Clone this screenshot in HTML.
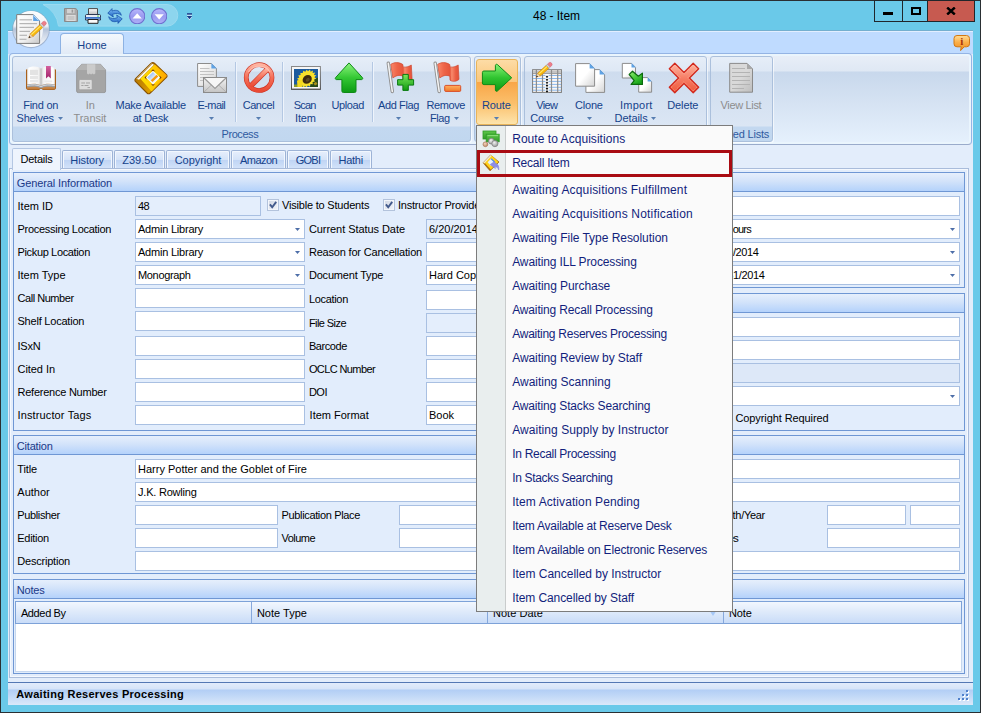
<!DOCTYPE html>
<html><head><meta charset="utf-8"><title>48 - Item</title>
<style>

html,body{margin:0;padding:0}
body{width:981px;height:713px;position:relative;overflow:hidden;background:#6ac9e9;font:11px "Liberation Sans",sans-serif;color:#000}
div,span,svg{position:absolute;box-sizing:border-box}
.x{white-space:pre;line-height:16px;height:16px}
.t{font:11px "Liberation Sans",sans-serif}
.tb{font:bold 11px "Liberation Sans",sans-serif}
.s{font:12px "Liberation Sans",sans-serif}
.rb{color:#15428b}
.in{background:#fff;border:1px solid #a9c0e2}
.ind{background:#e4eefc;border:1px solid #a9c0e2}
.gb{border:1px solid #6f97d4;background:#e2edfc}
.gh{background:linear-gradient(#e6effc 0%,#d3e3fa 45%,#b4d2fb 100%);border-bottom:1px solid #6f97d4}
.tab{border:1px solid #9db3d6;border-bottom:none;border-radius:2px 2px 0 0;background:linear-gradient(#e7effc 0%,#d5e3f8 50%,#bfd4f4 53%,#d2e2f9 100%);box-shadow:inset 1px 1px 0 #f2f7fe,inset -1px 0 0 #f2f7fe}
.grp{border:1px solid #abc0dc;border-radius:3px;background:linear-gradient(#e6eef8 0px,#dee8f5 14px,#cedcee 15px,#dbe6f4 69px,#c3d8f0 70px,#c1d7ef 100%);box-shadow:1px 1px 0 rgba(255,255,255,.6)}
.sep{width:1px;background:#b4c8e3;border-right:1px solid #eef4fc;box-sizing:content-box}

</style></head>
<body>
<div class="" style="left:0px;top:0px;width:981px;height:713px;border:1px solid #2a2f33;border-right-color:#2a2f33;"></div>
<span class="x s" style="left:533.00px;top:9px;letter-spacing:-0.040px;">48 - Item</span>
<div class="" style="left:874px;top:0px;width:101px;height:22px;border:1px solid #20262b;background:#6ac9e9"></div>
<div class="" style="left:902px;top:1px;width:1px;height:20px;background:#20262b"></div>
<div class="" style="left:927px;top:1px;width:1px;height:20px;background:#20262b"></div>
<div class="" style="left:928px;top:1px;width:46px;height:20px;background:#c75a50"></div>
<div class="" style="left:883px;top:12px;width:10px;height:3px;background:#000"></div>
<div class="" style="left:911px;top:7px;width:10px;height:8px;border:2px solid #000"></div>
<svg style="left:946px;top:7px" width="10" height="8" viewBox="0 0 10 8"><path d="M1.2 0.5L8.8 7.5M8.8 0.5L1.2 7.5" stroke="#000" stroke-width="2.4" fill="none"/></svg>
<svg style="left:0;top:0" width="200" height="31" viewBox="0 0 200 31"><path d="M43 4.5H167A10.8 10.8 0 0 1 167 26.1H58.5A27 27 0 0 0 43 4.5z" fill="#8dd5ee" stroke="#9adaf0" stroke-width="1"/></svg>
<svg style="left:64px;top:8px" width="14" height="14" viewBox="0 0 14 14">
<path d="M0.5 0.5H11.8L13.5 2.2V13.5H0.5z" fill="#a9a9a9" stroke="#8a8a8a"/>
<rect x="3" y="1" width="7.5" height="4.2" fill="#d2d2d2"/><rect x="7.6" y="1.6" width="1.6" height="3" fill="#9a9a9a"/>
<rect x="2.3" y="7" width="9.4" height="6" fill="#dcdcdc"/><path d="M3.5 9H10.5M3.5 11H10.5" stroke="#b0b0b0" stroke-width="1"/>
</svg>
<svg style="left:85px;top:8px" width="16" height="16" viewBox="0 0 16 16">
<defs><linearGradient id="pr1" x1="0" y1="0" x2="0" y2="1"><stop offset="0" stop-color="#ffffff"/><stop offset="1" stop-color="#b9b9b9"/></linearGradient></defs>
<path d="M3.5 0.6H12.5V7H3.5z" fill="url(#pr1)" stroke="#4a4a4a" stroke-width="1"/>
<path d="M1.5 6.5h13a1.2 1.2 0 0 1 1 1.2V12H0.5V7.7a1.2 1.2 0 0 1 1-1.2z" fill="#e9edf4" stroke="#2c3a55" stroke-width="1"/>
<rect x="0.6" y="9" width="14.8" height="1.8" fill="#3f74c8"/>
<rect x="12" y="7.6" width="2" height="1" fill="#5fd05f"/>
<path d="M3 11.5H13V15.3H3z" fill="#fafafa" stroke="#222" stroke-width="1"/>
</svg>
<svg style="left:107px;top:8px" width="16" height="16" viewBox="0 0 16 16">
<defs><linearGradient id="rf1" x1="0" y1="0" x2="0" y2="1"><stop offset="0" stop-color="#7fc0f5"/><stop offset="1" stop-color="#1d62c4"/></linearGradient></defs>
<path d="M0.8 5.2L5 0.6V3C9.5 1.2 13.3 3 14.3 7.3C12.3 5.2 9 5 5.6 6.3L6.3 9z" fill="url(#rf1)" stroke="#1c57ad" stroke-width="0.8"/>
<path d="M15.2 10.8L11 15.4V13C6.5 14.8 2.7 13 1.7 8.7C3.7 10.8 7 11 10.4 9.7L9.7 7z" fill="url(#rf1)" stroke="#1c57ad" stroke-width="0.8"/>
</svg>
<svg style="left:128.8px;top:7.5px" width="16.4" height="16.4" viewBox="0 0 16.4 16.4">
<defs><linearGradient id="cu" x1="0" y1="0" x2="0" y2="1"><stop offset="0" stop-color="#b9b9fb"/><stop offset="0.5" stop-color="#9a9af0"/><stop offset="1" stop-color="#aeb0f6"/></linearGradient></defs>
<circle cx="8.2" cy="8.2" r="7.6" fill="url(#cu)" stroke="#6f6fd0" stroke-width="1.1"/>
<path d="M3.6 10.6L8.2 5.3L12.8 10.6z" fill="#fff"/></svg>
<svg style="left:150.8px;top:7.5px" width="16.4" height="16.4" viewBox="0 0 16.4 16.4">
<defs><linearGradient id="cd" x1="0" y1="0" x2="0" y2="1"><stop offset="0" stop-color="#b9b9fb"/><stop offset="0.5" stop-color="#9a9af0"/><stop offset="1" stop-color="#aeb0f6"/></linearGradient></defs>
<circle cx="8.2" cy="8.2" r="7.6" fill="url(#cd)" stroke="#6f6fd0" stroke-width="1.1"/>
<path d="M3.6 6.2L8.2 11.5L12.8 6.2z" fill="#fff"/></svg>
<svg style="left:186px;top:12px" width="7" height="9" viewBox="0 0 7 9">
<rect x="1" y="2" width="5" height="1.6" fill="#e8f6fc"/><path d="M1 5H6L3.5 8.3z" fill="#e8f6fc"/>
<rect x="1" y="1.2" width="5" height="1.5" fill="#1a3c8c"/><path d="M0.8 4H6.2L3.5 7.3z" fill="#1a3c8c"/>
</svg>
<div class="" style="left:8px;top:31px;width:965px;height:674px;background:#e3edfb"></div>
<div class="" style="left:8px;top:30px;width:965px;height:24px;background:#bfdbff;border-top:1px solid #74afcf;box-shadow:inset 0 1px 0 #e2eeff"></div>
<div class="" style="left:60px;top:33px;width:64px;height:21px;border:1px solid #8db2e3;border-bottom:none;border-radius:4px 4px 0 0;background:linear-gradient(#f4f8fd,#e1eaf6)"></div>
<span class="x t" style="left:77.33px;top:39px;color:#15428b;">Home</span>
<svg style="left:953.3px;top:34px" width="18" height="18" viewBox="0 0 18 18">
<defs><linearGradient id="if1" x1="0" y1="0" x2="0" y2="1"><stop offset="0" stop-color="#ffdc96"/><stop offset="0.45" stop-color="#fbb04a"/><stop offset="1" stop-color="#f08a1c"/></linearGradient></defs>
<path d="M4 1.5H13.5A3 3 0 0 1 16.5 4.5V9.8A3 3 0 0 1 13.5 12.8H11.2L7.6 16.6L8.2 12.8H4A3 3 0 0 1 1 9.8V4.5A3 3 0 0 1 4 1.5z" fill="url(#if1)" stroke="#d27812" stroke-width="1"/>
<text x="8.8" y="11.4" font-family="Liberation Serif,serif" font-weight="bold" font-size="11" text-anchor="middle" fill="#a8300c">i</text>
</svg>
<div class="" style="left:9px;top:53px;width:963px;height:92px;border:1px solid #94b4e4;border-bottom-color:#9aabcb;border-radius:4px;box-shadow:inset 0 0 0 2px #eaf5fd;background:linear-gradient(#e9eff8 0px,#dfe8f4 17px,#c8d8ec 18px,#d6e3f3 50px,#e6f1fd 100%)"></div>
<div class="" style="left:61px;top:53px;width:62px;height:1px;background:#e1eaf6"></div>
<div class="grp" style="left:12px;top:56px;width:459px;height:86px;"></div>
<div class="grp" style="left:474px;top:56px;width:47px;height:86px;"></div>
<div class="grp" style="left:524px;top:56px;width:183px;height:86px;"></div>
<div class="grp" style="left:710px;top:56px;width:63px;height:86px;"></div>
<span class="x t" style="left:221.60px;top:128px;letter-spacing:-0.450px;color:#2f5aa0;">Process</span>
<span class="x t" style="left:708.10px;top:128px;letter-spacing:-0.200px;color:#2f5aa0;">Related Lists</span>
<div class="sep" style="left:235px;top:62px;width:1px;height:60px;"></div>
<div class="sep" style="left:282px;top:62px;width:1px;height:60px;"></div>
<div class="sep" style="left:372px;top:62px;width:1px;height:60px;"></div>
<div class="" style="left:476px;top:59px;width:42px;height:66px;border:1px solid #e8b45a;border-radius:3px;background:linear-gradient(#fddca6 0%,#fbc77c 34%,#f9a648 35%,#fbc06c 68%,#fde4ac 100%)"></div>
<svg style="left:24px;top:62px" width="36" height="32" viewBox="24 62 36 32">
<defs>
<linearGradient id="bk1" x1="0" y1="0" x2="1" y2="0"><stop offset="0" stop-color="#e4e4e4"/><stop offset="0.12" stop-color="#ffffff"/><stop offset="0.8" stop-color="#f4f4f4"/><stop offset="1" stop-color="#cfcfcf"/></linearGradient>
<linearGradient id="bk2" x1="0" y1="0" x2="1" y2="0"><stop offset="0" stop-color="#cfcfcf"/><stop offset="0.2" stop-color="#f4f4f4"/><stop offset="0.88" stop-color="#ffffff"/><stop offset="1" stop-color="#e4e4e4"/></linearGradient>
<linearGradient id="bk3" x1="0" y1="0" x2="0" y2="1"><stop offset="0" stop-color="#d4609e"/><stop offset="1" stop-color="#a2246a"/></linearGradient>
</defs>
<path d="M26.5 69.8V88.3C26.5 89 27 89.4 27.6 89.4H39.4L40.2 88.4H41.8L42.6 89.4H54.4C55 89.4 55.5 89 55.5 88.3V69.8z" fill="#c98544" stroke="#a9611c" stroke-width="1"/>
<path d="M27.2 84.5C31.5 83.2 38 83.4 41 85.6C44 83.4 50.5 83.2 54.8 84.5V87.4C50.5 86.4 44.5 86.6 41.6 88.2H40.4C37.5 86.6 31.5 86.4 27.2 87.4z" fill="#9a9ea4"/>
<path d="M27.2 85.6C31.5 84.4 38 84.6 41 86.6C44 84.6 50.5 84.4 54.8 85.6" stroke="#e2e4e6" stroke-width="0.9" fill="none"/>
<path d="M27.2 68.2C31.5 65.8 38 65.8 41 68.6V85.6C38 83.4 31.5 83.2 27.2 84.5z" fill="url(#bk1)"/>
<path d="M54.8 68.2C50.5 65.8 44 65.8 41 68.6V85.6C44 83.4 50.5 83.2 54.8 84.5z" fill="url(#bk2)"/>
<path d="M41 68.6V85.8" stroke="#bdbdbd" stroke-width="0.8"/>
<rect x="30" y="69.8" width="8" height="5.2" fill="#e3e3e3"/><rect x="30" y="76" width="8" height="3" fill="#e6e6e6"/><rect x="30" y="80" width="8" height="2.2" fill="#e9e9e9"/>
<rect x="44.4" y="80.4" width="7.8" height="1.8" fill="#ebebeb"/>
<path d="M46 66H50.8V78.4L48.4 76.2L46 78.4z" fill="url(#bk3)"/>
</svg>
<svg style="left:75px;top:62px" width="33" height="32" viewBox="75 62 33 32">
<path d="M81.6 64.3H100.6L105.6 70V91A1.6 1.6 0 0 1 104 92.6H78.2A1.6 1.6 0 0 1 76.6 91V70z" fill="#a5a5a5" stroke="#8f8f8f" stroke-width="0.8"/>
<path d="M81.6 64.3H100.6L105.6 70H76.6z" fill="#b4b4b4"/>
<path d="M87 64.3H95.3V73.6L93.9 74.6L92.5 73.6L91.1 74.6L89.7 73.6L88.3 74.6L87 73.6z" fill="#cbcbcb"/>
<rect x="79" y="79.5" width="13.2" height="10.2" rx="1.3" fill="#dcdcdc" stroke="#999" stroke-width="0.6"/>
<path d="M81.3 83H85M86 83H90M81.3 85.5H83.5M84.5 85.5H88.5M87.5 87.6H90" stroke="#a3a3a3" stroke-width="1"/>
</svg>
<svg style="left:133px;top:61px" width="36" height="34" viewBox="133 61 36 34">
<defs>
<linearGradient id="yb1" gradientUnits="userSpaceOnUse" x1="141" y1="78" x2="166" y2="78"><stop offset="0" stop-color="#ffe000"/><stop offset="0.45" stop-color="#ffcf00"/><stop offset="1" stop-color="#ffa600"/></linearGradient>
<linearGradient id="yb2" gradientUnits="userSpaceOnUse" x1="147" y1="73" x2="157" y2="83"><stop offset="0" stop-color="#6ea4f0"/><stop offset="0.55" stop-color="#dbe8fb"/><stop offset="1" stop-color="#ffffff"/></linearGradient>
<linearGradient id="yb3" gradientUnits="userSpaceOnUse" x1="136" y1="80" x2="150" y2="93"><stop offset="0" stop-color="#b87a00"/><stop offset="1" stop-color="#e0a000"/></linearGradient>
</defs>
<path d="M151 63.4L135.6 78.6C134.8 79.6 134.8 80.8 135.6 81.6L147 93C148 93.9 149.2 93.9 150.2 93L166.4 77.4C167.2 76.4 167.2 75.4 166.4 74.6L154.4 63.2C153.4 62.4 152 62.5 151 63.4z" fill="url(#yb3)" stroke="#8a5200" stroke-width="1.1" stroke-linejoin="round"/>
<path d="M154.7 64.4L140.4 78.8L151.6 91.4L166.2 76.4C166.8 75.8 166.8 75.2 166.2 74.8z" fill="url(#yb1)"/>
<path d="M151.6 63.6L136.4 78.8L139 79.8L154 64.8z" fill="#fbf7ea"/>
<path d="M152.4 63.6L137.4 78.6" stroke="#8a5200" stroke-width="0.5"/>
<path d="M153 69.3L161.6 77.6L153 86L144.5 77.6z" fill="#7a4208"/>
<path d="M150.4 71.2L155.6 71.2L159.6 75L159.6 80.2L155.6 84.2L150.4 84.2L146.4 80.2L146.4 75z" fill="#ffcf00"/>
<path d="M153 70.8L160 77.6L153 84.6L146 77.6z" fill="#ffffff"/>
<path d="M153 72L158.8 77.6L153 83.4L147.2 77.6z" fill="url(#yb2)"/>
<path d="M151.6 81.2L157.4 75.6" stroke="#f59a10" stroke-width="2.4"/>
</svg>
<svg style="left:196px;top:62px" width="32" height="32" viewBox="196 62 32 32">
<defs>
<linearGradient id="em1" x1="0" y1="0" x2="1" y2="1"><stop offset="0" stop-color="#ffffff"/><stop offset="1" stop-color="#d6d6d6"/></linearGradient>
<linearGradient id="em2" x1="0" y1="0" x2="0" y2="1"><stop offset="0" stop-color="#f4f4f4"/><stop offset="1" stop-color="#c4c4c4"/></linearGradient>
</defs>
<path d="M197.6 63.5H211.4L216.4 68.5V86.4H197.6z" fill="url(#em1)" stroke="#8c8c8c" stroke-width="1"/>
<path d="M211.4 63.2L216.8 68.6H211.4z" fill="#5fa3e6"/>
<g stroke="#c2c2c2" stroke-width="1"><path d="M200 68.5H209.5M200 71.5H214M200 74.5H214M200 77.5H203M200 80.5H203"/></g>
<rect x="203.5" y="77.5" width="23" height="15" fill="url(#em2)" stroke="#8a8a8a" stroke-width="1"/>
<path d="M204 92L212.5 84M226 92L217.5 84" stroke="#b0b0b0" stroke-width="1" fill="none"/>
<path d="M204 78L215 88.4L226 78" stroke="#9a9a9a" stroke-width="1.2" fill="#f6f6f6"/>
</svg>
<svg style="left:242px;top:61px" width="34" height="34" viewBox="242 61 34 34">
<defs>
<linearGradient id="cn1" x1="0" y1="0" x2="0" y2="1"><stop offset="0" stop-color="#ffb4a0"/><stop offset="0.5" stop-color="#f46e58"/><stop offset="1" stop-color="#ea4a34"/></linearGradient>
</defs>
<circle cx="259.1" cy="77.6" r="12.9" fill="none" stroke="#cc3222" stroke-width="4.7"/>
<path d="M249.6 87.1L268.6 68.1" stroke="#cc3222" stroke-width="5.2"/>
<circle cx="259.1" cy="77.6" r="12.9" fill="none" stroke="url(#cn1)" stroke-width="3.5"/>
<path d="M250 86.7L268.2 68.5" stroke="url(#cn1)" stroke-width="4"/>
<path d="M248.5 72A12.9 12.9 0 0 1 270 72" stroke="#ffc4b6" stroke-width="1.3" fill="none" opacity="0.8"/>
</svg>
<svg style="left:290px;top:65px" width="33" height="27" viewBox="290 65 33 27">
<defs><linearGradient id="sc0" x1="0" y1="0" x2="0" y2="1"><stop offset="0" stop-color="#8a8a8a"/><stop offset="1" stop-color="#4c4c4c"/></linearGradient>
<clipPath id="scc"><rect x="294" y="69" width="24" height="18"/></clipPath></defs>
<rect x="291" y="66" width="29.9" height="23.9" fill="url(#sc0)"/>
<rect x="292" y="67" width="27.9" height="21.6" fill="#f6f6f6"/>
<rect x="294" y="69" width="24" height="18" fill="#1b5a9e"/>
<g clip-path="url(#scc)">
<path d="M294 84.4H301.5L303 87H294z" fill="#8a9a2a"/>
<path d="M311 82L315 79L318 77.5V87H310z" fill="#2a4a1c"/>
<path d="M313.5 83.5L316 81.8L317.5 84L315 85.5z" fill="#a8901c"/>
<path d="M315.1 72.6L314.0 74.9L316.3 75.3L314.4 77.2L316.2 78.5L313.9 79.7L315.0 81.6L312.6 82.1L312.8 84.3L310.5 84.1L309.9 86.4L307.9 85.4L306.5 87.5L305.2 85.9L303.2 87.6L302.6 85.5L300.2 86.6L300.6 84.3L298.1 84.6L299.2 82.3L296.9 81.9L298.8 80.0L297.0 78.7L299.3 77.5L298.2 75.6L300.6 75.1L300.4 72.9L302.7 73.1L303.3 70.8L305.3 71.8L306.7 69.7L308.0 71.3L310.0 69.6L310.6 71.7L313.0 70.6L312.6 72.9z" fill="#f8e02c"/>
<path d="M297 80.5L303 79.5L302 86.9H297.5z" fill="#f4d820"/>
<ellipse cx="307.2" cy="79.4" rx="4.9" ry="4.1" transform="rotate(-40 307.2 79.4)" fill="#3e2a10"/>
<ellipse cx="307.8" cy="79.8" rx="2.2" ry="1.6" transform="rotate(-40 307.8 79.8)" fill="#5c4a24"/>
</g>
</svg>
<svg style="left:333px;top:61px" width="32" height="33" viewBox="333 61 32 33">
<defs><linearGradient id="up1" x1="0" y1="0" x2="0" y2="1"><stop offset="0" stop-color="#8cf47c"/><stop offset="0.5" stop-color="#34c834"/><stop offset="1" stop-color="#0c9a14"/></linearGradient></defs>
<path d="M349 62.9L362.4 77.6A1.2 1.2 0 0 1 361.6 79.6H356V91A1.5 1.5 0 0 1 354.5 92.5H343.4A1.5 1.5 0 0 1 341.9 91V79.6H336.4A1.2 1.2 0 0 1 335.6 77.6z" fill="url(#up1)" stroke="#0f8a16" stroke-width="1"/>
</svg>
<svg style="left:385px;top:61px" width="34" height="33" viewBox="385 61 34 33">
<defs>
<linearGradient id="fl388" x1="0" y1="0" x2="1" y2="0"><stop offset="0" stop-color="#f9876a"/><stop offset="0.3" stop-color="#ee6448"/><stop offset="0.58" stop-color="#e4553c"/><stop offset="0.66" stop-color="#f88a6c"/><stop offset="0.85" stop-color="#ea5c42"/><stop offset="1" stop-color="#e2523a"/></linearGradient>
<linearGradient id="pl388" x1="0" y1="0" x2="0" y2="1"><stop offset="0" stop-color="#7ae85c"/><stop offset="1" stop-color="#109a10"/></linearGradient>
<linearGradient id="mn388" x1="0" y1="0" x2="0" y2="1"><stop offset="0" stop-color="#ffb060"/><stop offset="1" stop-color="#f07a2c"/></linearGradient>
</defs>
<path d="M390.7 64.4C394.3 62 399.3 62 402.90000000000003 64.6L403.1 66.9C405.8 67.6 408.8 66.6 411.3 65L412.1 79.4C409.3 81.6 405.8 82 403.1 80.2L402.90000000000003 76.2C399.3 74.6 395.8 75.6 392.90000000000003 78z" fill="url(#fl388)" stroke="#cf4a32" stroke-width="0.7" stroke-linejoin="round"/>
<path d="M388.3 63.3L392.3 91.5" stroke="#8e8e8e" stroke-width="3.4" stroke-linecap="round"/>
<path d="M388.3 63.3L392.3 91.5" stroke="#f2f2f2" stroke-width="1.6" stroke-linecap="round"/>
<path d="M402.90000000000003 74.4H408.3V79.7H413.6V85.10000000000001H408.3V90.4H402.90000000000003V85.10000000000001H397.6V79.7H402.90000000000003z" fill="url(#pl388)" stroke="#0b7a10" stroke-width="1" stroke-linejoin="round"/></svg>
<svg style="left:432px;top:61px" width="34" height="33" viewBox="432 61 34 33">
<defs>
<linearGradient id="fl435" x1="0" y1="0" x2="1" y2="0"><stop offset="0" stop-color="#f9876a"/><stop offset="0.3" stop-color="#ee6448"/><stop offset="0.58" stop-color="#e4553c"/><stop offset="0.66" stop-color="#f88a6c"/><stop offset="0.85" stop-color="#ea5c42"/><stop offset="1" stop-color="#e2523a"/></linearGradient>
<linearGradient id="pl435" x1="0" y1="0" x2="0" y2="1"><stop offset="0" stop-color="#7ae85c"/><stop offset="1" stop-color="#109a10"/></linearGradient>
<linearGradient id="mn435" x1="0" y1="0" x2="0" y2="1"><stop offset="0" stop-color="#ffb060"/><stop offset="1" stop-color="#f07a2c"/></linearGradient>
</defs>
<path d="M437.59999999999997 64.4C441.2 62 446.2 62 449.8 64.6L450.0 66.9C452.7 67.6 455.7 66.6 458.2 65L459.0 79.4C456.2 81.6 452.7 82 450.0 80.2L449.8 76.2C446.2 74.6 442.7 75.6 439.8 78z" fill="url(#fl435)" stroke="#cf4a32" stroke-width="0.7" stroke-linejoin="round"/>
<path d="M435.2 63.3L439.2 91.5" stroke="#8e8e8e" stroke-width="3.4" stroke-linecap="round"/>
<path d="M435.2 63.3L439.2 91.5" stroke="#f2f2f2" stroke-width="1.6" stroke-linecap="round"/>
<rect x="444.7" y="85.4" width="16" height="6" rx="1" fill="url(#mn435)" stroke="#d8431c" stroke-width="0.9"/></svg>
<svg style="left:480px;top:62px" width="34" height="32" viewBox="480 62 34 32">
<defs><linearGradient id="rt1" x1="0" y1="0" x2="0" y2="1"><stop offset="0" stop-color="#86f274"/><stop offset="0.5" stop-color="#30c430"/><stop offset="1" stop-color="#0c9814"/></linearGradient></defs>
<path d="M511.7 77.8L497.4 91A1.2 1.2 0 0 1 495.4 90.2V84.6H483.9A1.5 1.5 0 0 1 482.4 83.1V72.5A1.5 1.5 0 0 1 483.9 71H495.4V65.4A1.2 1.2 0 0 1 497.4 64.6z" fill="url(#rt1)" stroke="#0f8a16" stroke-width="1"/>
</svg>
<svg style="left:531px;top:61px" width="33" height="33" viewBox="531 61 33 33">
<rect x="532.6" y="69.7" width="28.8" height="22.7" fill="#fbf7f4" stroke="#7a7a7a" stroke-width="1"/>
<rect x="533.1" y="70.6" width="27.8" height="3" fill="#c4c4c4"/><path d="M533 73.6H561" stroke="#8a8a8a" stroke-width="0.8"/>
<path d="M533 75.5H561" stroke="#8ab8ee" stroke-width="1"/><path d="M533 78.5H561" stroke="#8ab8ee" stroke-width="1"/><path d="M533 81.4H561" stroke="#8ab8ee" stroke-width="1"/><path d="M533 84.4H561" stroke="#8ab8ee" stroke-width="1"/><path d="M533 87.3H561" stroke="#8ab8ee" stroke-width="1"/><path d="M533 90.2H561" stroke="#8ab8ee" stroke-width="1"/><path d="M536.4 70V92.4" stroke="#8c8c8c" stroke-width="1.2"/><path d="M542.5 70V92.4" stroke="#8c8c8c" stroke-width="1.2"/><path d="M551.5 70V92.4" stroke="#8c8c8c" stroke-width="1.2"/><path d="M557.7 70V92.4" stroke="#8c8c8c" stroke-width="1.2"/>
<path d="M547 74V92.2" stroke="#fff" stroke-width="3.2"/>
<path d="M547 75.5L548.3 76.8L547 78.1L545.7 76.8z" fill="#111"/><path d="M547 78.5L548.3 79.8L547 81.1L545.7 79.8z" fill="#111"/><path d="M547 81.4L548.3 82.7L547 84.0L545.7 82.7z" fill="#111"/><path d="M547 84.3L548.3 85.6L547 86.89999999999999L545.7 85.6z" fill="#111"/><path d="M547 87.3L548.3 88.6L547 89.89999999999999L545.7 88.6z" fill="#111"/><path d="M547 90.10000000000001L548.3 91.4L547 92.7L545.7 91.4z" fill="#111"/>
<g transform="translate(536.1,77.3) rotate(-42.5)">
<path d="M0 0L4 -2V2z" fill="#f6dfba" stroke="#c8823c" stroke-width="0.4"/><path d="M0 0L1.8 -0.9V0.9z" fill="#111"/>
<rect x="4" y="-2" width="11.6" height="4" fill="#f8b80a" stroke="#c87a10" stroke-width="0.5"/><rect x="4" y="-1.2" width="11.6" height="1.2" fill="#ffe870"/>
<rect x="15.6" y="-2" width="1.8" height="4" fill="#d4d4d4" stroke="#8a8a8a" stroke-width="0.4"/>
<path d="M17.4 -2h1.6a2 2 0 0 1 0 4h-1.6z" fill="#ee7e8a" stroke="#c85a66" stroke-width="0.4"/>
</g>
</svg>
<svg style="left:574px;top:62px" width="33" height="32" viewBox="574 62 33 32"><defs><linearGradient id="cl1" x1="0" y1="0" x2="1" y2="1"><stop offset="0" stop-color="#ffffff"/><stop offset="0.5" stop-color="#ffffff"/><stop offset="1" stop-color="#d4d4d4"/></linearGradient></defs>
<path d="M585.9 69.6H599.6L604.6 74.6V92.4H585.9z" fill="url(#cl1)" stroke="#8c8c8c" stroke-width="1"/>
<path d="M599.6 69.3L604.9 74.6H599.6z" fill="#5fa3e6"/><defs><linearGradient id="cl2" x1="0" y1="0" x2="1" y2="1"><stop offset="0" stop-color="#ffffff"/><stop offset="0.5" stop-color="#ffffff"/><stop offset="1" stop-color="#d4d4d4"/></linearGradient></defs>
<path d="M575.6 63.6H589.6L594.6 68.6V86.2H575.6z" fill="url(#cl2)" stroke="#8c8c8c" stroke-width="1"/>
<path d="M589.6 63.300000000000004L594.9 68.6H589.6z" fill="#5fa3e6"/></svg>
<svg style="left:620px;top:61px" width="34" height="33" viewBox="620 61 34 33"><defs><linearGradient id="im1" x1="0" y1="0" x2="1" y2="1"><stop offset="0" stop-color="#ffffff"/><stop offset="0.5" stop-color="#ffffff"/><stop offset="1" stop-color="#d4d4d4"/></linearGradient></defs>
<path d="M622.3 63.4H631.5L635.5 67.4V78.0H622.3z" fill="url(#im1)" stroke="#8c8c8c" stroke-width="1"/>
<path d="M631.5 63.1L635.8 67.4H631.5z" fill="#5fa3e6"/><defs><linearGradient id="im2" x1="0" y1="0" x2="1" y2="1"><stop offset="0" stop-color="#ffffff"/><stop offset="0.5" stop-color="#ffffff"/><stop offset="1" stop-color="#d4d4d4"/></linearGradient></defs>
<path d="M638.7 77.6H647.6L651.6 81.6V92.2H638.7z" fill="url(#im2)" stroke="#8c8c8c" stroke-width="1"/>
<path d="M647.6 77.3L651.9 81.6H647.6z" fill="#5fa3e6"/>
<defs><linearGradient id="im3" x1="0" y1="0" x2="0.6" y2="1"><stop offset="0" stop-color="#9cf07c"/><stop offset="0.5" stop-color="#4ccc3c"/><stop offset="1" stop-color="#18a41c"/></linearGradient></defs>
<path d="M629.2 74.5L632.5 71.2L638.4 76.2L642.4 73.1V84.4H631.1L634.2 80.7z" fill="url(#im3)" stroke="#0b6a0e" stroke-width="1.2" stroke-linejoin="round"/>
</svg>
<svg style="left:667px;top:61px" width="34" height="34" viewBox="667 61 34 34">
<defs><linearGradient id="dl1" gradientUnits="userSpaceOnUse" x1="0" y1="63" x2="0" y2="93"><stop offset="0" stop-color="#ffb8a4"/><stop offset="0.5" stop-color="#f67e66"/><stop offset="1" stop-color="#ef5638"/></linearGradient></defs>
<path d="M693.2 92.7L684.0 83.5L674.8 92.7L669.3 87.2L678.5 78.0L669.3 68.8L674.8 63.3L684.0 72.5L693.2 63.3L698.7 68.8L689.5 78.0L698.7 87.2z" fill="url(#dl1)" stroke="#d2281c" stroke-width="1.3" stroke-linejoin="round"/>
<path d="M693.2 90.9L684.0 81.7L674.8 90.9L671.1 87.2L680.3 78.0L671.1 68.8L674.8 65.1L684.0 74.3L693.2 65.1L696.9 68.8L687.7 78.0L696.9 87.2z" fill="none" stroke="#ffd6c8" stroke-width="0.6" stroke-dasharray="1 1" opacity="0.8"/>
</svg>
<svg style="left:728px;top:62px" width="26" height="32" viewBox="728 62 26 32"><defs><linearGradient id="vl1" x1="0" y1="0" x2="1" y2="1"><stop offset="0" stop-color="#d9d9d9"/><stop offset="0.5" stop-color="#d9d9d9"/><stop offset="1" stop-color="#bdbdbd"/></linearGradient></defs>
<path d="M729.7 63.4H747L752.5 68.9V92.2H729.7z" fill="url(#vl1)" stroke="#8a8a8a" stroke-width="1"/>
<path d="M747 63.1L752.8 68.9H747z" fill="#a8a8a8"/>
<g stroke="#b3b3b3" stroke-width="1.2"><path d="M732 68.5H745M732 72.5H750M732 76.5H750M732 80.5H750M732 84.5H750M732 88.5H744"/></g>
</svg>
<span class="x t" style="left:23.20px;top:99px;letter-spacing:-0.243px;color:#15428b;">Find on</span>
<span class="x t" style="left:16.60px;top:112px;letter-spacing:-0.292px;color:#15428b;">Shelves</span>
<svg style="left:58.1px;top:116.5px" width="5" height="3" viewBox="0 0 5 3"><path d="M0 0h5L2.5 3z" fill="#567db1"/></svg>
<span class="x t" style="left:85.80px;top:99px;letter-spacing:-0.094px;color:#8d8d8d;">In</span>
<span class="x t" style="left:73.50px;top:112px;letter-spacing:-0.060px;color:#8d8d8d;">Transit</span>
<span class="x t" style="left:115.60px;top:99px;letter-spacing:-0.257px;color:#15428b;">Make Available</span>
<span class="x t" style="left:132.70px;top:112px;letter-spacing:-0.257px;color:#15428b;">at Desk</span>
<span class="x t" style="left:197.50px;top:99px;letter-spacing:-0.579px;color:#15428b;">E-mail</span>
<svg style="left:208.5px;top:116.5px" width="5" height="3" viewBox="0 0 5 3"><path d="M0 0h5L2.5 3z" fill="#567db1"/></svg>
<span class="x t" style="left:242.80px;top:99px;letter-spacing:-0.492px;color:#15428b;">Cancel</span>
<svg style="left:256.0px;top:116.5px" width="5" height="3" viewBox="0 0 5 3"><path d="M0 0h5L2.5 3z" fill="#567db1"/></svg>
<span class="x t" style="left:293.70px;top:99px;letter-spacing:-0.770px;color:#15428b;">Scan</span>
<span class="x t" style="left:295.00px;top:112px;letter-spacing:-0.177px;color:#15428b;">Item</span>
<span class="x t" style="left:331.60px;top:99px;letter-spacing:-0.427px;color:#15428b;">Upload</span>
<span class="x t" style="left:378.00px;top:99px;letter-spacing:-0.391px;color:#15428b;">Add Flag</span>
<svg style="left:395.8px;top:116.5px" width="5" height="3" viewBox="0 0 5 3"><path d="M0 0h5L2.5 3z" fill="#567db1"/></svg>
<span class="x t" style="left:426.50px;top:99px;letter-spacing:-0.428px;color:#15428b;">Remove</span>
<span class="x t" style="left:430.00px;top:112px;letter-spacing:-0.427px;color:#15428b;">Flag</span>
<svg style="left:453.8px;top:116.5px" width="5" height="3" viewBox="0 0 5 3"><path d="M0 0h5L2.5 3z" fill="#567db1"/></svg>
<span class="x t" style="left:482.00px;top:99px;letter-spacing:-0.132px;color:#15428b;">Route</span>
<svg style="left:494.2px;top:116.5px" width="5" height="3" viewBox="0 0 5 3"><path d="M0 0h5L2.5 3z" fill="#567db1"/></svg>
<span class="x t" style="left:536.20px;top:99px;letter-spacing:-0.614px;color:#15428b;">View</span>
<span class="x t" style="left:530.30px;top:112px;letter-spacing:-0.361px;color:#15428b;">Course</span>
<span class="x t" style="left:575.00px;top:99px;letter-spacing:-0.210px;color:#15428b;">Clone</span>
<svg style="left:586.5px;top:116.5px" width="5" height="3" viewBox="0 0 5 3"><path d="M0 0h5L2.5 3z" fill="#567db1"/></svg>
<span class="x t" style="left:620.00px;top:99px;letter-spacing:0.235px;color:#15428b;">Import</span>
<span class="x t" style="left:614.50px;top:112px;letter-spacing:-0.061px;color:#15428b;">Details</span>
<svg style="left:650.8px;top:116.5px" width="5" height="3" viewBox="0 0 5 3"><path d="M0 0h5L2.5 3z" fill="#567db1"/></svg>
<span class="x t" style="left:667.30px;top:99px;letter-spacing:-0.133px;color:#15428b;">Delete</span>
<span class="x t" style="left:720.50px;top:99px;letter-spacing:-0.336px;color:#8d8d8d;">View List</span>
<svg style="left:11px;top:9px" width="40" height="40" viewBox="0 0 40 40">
<defs>
<radialGradient id="ob1" cx="50%" cy="50%" r="50%"><stop offset="0" stop-color="#f4f6fa"/><stop offset="0.8" stop-color="#e4e9f1"/><stop offset="1" stop-color="#b9c3d3"/></radialGradient>
<linearGradient id="ob2" x1="0" y1="0" x2="0" y2="1"><stop offset="0" stop-color="#ffffff"/><stop offset="0.42" stop-color="#eef1f6"/><stop offset="0.5" stop-color="#b4c2d8"/><stop offset="0.62" stop-color="#c8d3e4"/><stop offset="1" stop-color="#ffffff"/></linearGradient>
<linearGradient id="dc1" x1="0" y1="0" x2="1" y2="1"><stop offset="0" stop-color="#ffffff"/><stop offset="0.6" stop-color="#f0f0f0"/><stop offset="1" stop-color="#c9c9c9"/></linearGradient>
</defs>
<circle cx="20" cy="20.3" r="18.9" fill="#8e9db6" opacity="0.6"/>
<circle cx="20" cy="20" r="18" fill="url(#ob2)"/>
<ellipse cx="20" cy="20" rx="12" ry="17.5" fill="#f6f8fb" opacity="0.9"/>
<path d="M5.7 5.6H22.2L28.6 12V34.4H5.7z" fill="url(#dc1)" stroke="#7c7c7c" stroke-width="1"/>
<path d="M22.2 5.2L29 12H22.2z" fill="#5fa3e6"/><path d="M22.8 6.5L27.6 11.3" stroke="#d8ebfb" stroke-width="1"/>
<g stroke="#b5b5b5" stroke-width="1.2"><path d="M8.5 10.8H21"/><path d="M8.5 14.6H26"/><path d="M8.5 18.4H23"/><path d="M8.5 22.4H19"/><path d="M8.5 26.3H16"/><path d="M8.5 30.3H15.5"/></g>
<g transform="translate(17.6,29) rotate(-43.2)">
<path d="M0 0L4.2 -2V2z" fill="#f6dfba" stroke="#c8823c" stroke-width="0.4"/><path d="M0 0L2 -0.95V0.95z" fill="#111"/>
<rect x="4.2" y="-2" width="13.3" height="4" fill="#f8b80a" stroke="#c87a10" stroke-width="0.5"/><rect x="4.2" y="-1.2" width="13.3" height="1.2" fill="#ffe870"/>
<rect x="17.5" y="-2" width="2" height="4" fill="#d4d4d4" stroke="#8a8a8a" stroke-width="0.4"/>
<path d="M19.5 -2h2a2 2 0 0 1 0 4h-2z" fill="#ee7e8a" stroke="#c85a66" stroke-width="0.4"/>
</g>
</svg>
<div class="" style="left:9px;top:168px;width:960px;height:510px;border:1px solid #a9bcdb;background:#e3edfb;box-shadow:inset 1px 1px 0 #f4f8fe,inset -1px -1px 0 #f4f8fe"></div>
<div class="" style="left:12px;top:148px;width:49px;height:22px;border:1px solid #b4c7e3;border-bottom:none;background:#eef4fd;border-radius:2px 2px 0 0"></div>
<span class="x t" style="left:20.40px;top:153px;letter-spacing:-0.204px;">Details</span>
<div class="tab" style="left:62px;top:150px;width:51px;height:18px;"></div>
<span class="x t" style="left:70.30px;top:154px;letter-spacing:-0.076px;color:#15428b;">History</span>
<div class="tab" style="left:114px;top:150px;width:51px;height:18px;"></div>
<span class="x t" style="left:122.30px;top:154px;letter-spacing:-0.025px;color:#15428b;">Z39.50</span>
<div class="tab" style="left:166px;top:150px;width:64px;height:18px;"></div>
<span class="x t" style="left:174.70px;top:154px;letter-spacing:-0.042px;color:#15428b;">Copyright</span>
<div class="tab" style="left:231px;top:150px;width:55px;height:18px;"></div>
<span class="x t" style="left:240.00px;top:154px;letter-spacing:-0.560px;color:#15428b;">Amazon</span>
<div class="tab" style="left:287px;top:150px;width:42px;height:18px;"></div>
<span class="x t" style="left:295.80px;top:154px;letter-spacing:-0.779px;color:#15428b;">GOBI</span>
<div class="tab" style="left:330px;top:150px;width:42px;height:18px;"></div>
<span class="x t" style="left:338.60px;top:154px;letter-spacing:-0.298px;color:#15428b;">Hathi</span>
<div class="gb" style="left:13px;top:172px;width:710px;height:259px;"></div>
<div class="gh" style="left:14px;top:173px;width:708px;height:19px;"></div>
<span class="x t" style="left:16.70px;top:177px;letter-spacing:-0.096px;color:#1a3888;">General Information</span>
<div class="gb" style="left:700px;top:172px;width:265px;height:116px;"></div>
<div class="gh" style="left:701px;top:173px;width:263px;height:19px;"></div>
<div class="gb" style="left:700px;top:293px;width:265px;height:138px;"></div>
<div class="gh" style="left:701px;top:294px;width:263px;height:19px;"></div>
<div class="gb" style="left:13px;top:435px;width:952px;height:139px;"></div>
<div class="gh" style="left:14px;top:436px;width:950px;height:19px;"></div>
<span class="x t" style="left:16.70px;top:440px;letter-spacing:-0.162px;color:#1a3888;">Citation</span>
<div class="gb" style="left:13px;top:579px;width:952px;height:95px;"></div>
<div class="gh" style="left:14px;top:580px;width:950px;height:19px;"></div>
<span class="x t" style="left:16.70px;top:584px;letter-spacing:-0.150px;color:#1a3888;">Notes</span>
<span class="x t" style="left:17.50px;top:200px;letter-spacing:0.007px;">Item ID</span>
<span class="x t" style="left:17.50px;top:223px;letter-spacing:-0.288px;">Processing Location</span>
<span class="x t" style="left:17.50px;top:246px;letter-spacing:-0.351px;">Pickup Location</span>
<span class="x t" style="left:17.50px;top:269px;letter-spacing:-0.001px;">Item Type</span>
<span class="x t" style="left:17.50px;top:292px;letter-spacing:-0.458px;">Call Number</span>
<span class="x t" style="left:17.50px;top:315px;letter-spacing:-0.216px;">Shelf Location</span>
<span class="x t" style="left:17.50px;top:340px;letter-spacing:-0.236px;">ISxN</span>
<span class="x t" style="left:17.50px;top:363px;letter-spacing:-0.053px;">Cited In</span>
<span class="x t" style="left:17.50px;top:386px;letter-spacing:-0.240px;">Reference Number</span>
<span class="x t" style="left:17.50px;top:409px;letter-spacing:0.130px;">Instructor Tags</span>
<div class="ind" style="left:135px;top:196px;width:126px;height:20px;"></div>
<span class="x t" style="left:138.00px;top:200px;letter-spacing:-0.625px;">48</span>
<div class="in" style="left:135px;top:219px;width:170px;height:20px;"></div>
<span class="x t" style="left:138.00px;top:223px;letter-spacing:-0.220px;">Admin Library</span>
<svg style="left:295.0px;top:228.0px" width="5" height="3" viewBox="0 0 5 3"><path d="M0 0h5L2.5 3z" fill="#4d6ea8"/></svg>
<div class="in" style="left:135px;top:242px;width:170px;height:20px;"></div>
<span class="x t" style="left:138.00px;top:246px;letter-spacing:-0.220px;">Admin Library</span>
<svg style="left:295.0px;top:251.0px" width="5" height="3" viewBox="0 0 5 3"><path d="M0 0h5L2.5 3z" fill="#4d6ea8"/></svg>
<div class="in" style="left:135px;top:265px;width:170px;height:20px;"></div>
<span class="x t" style="left:138.00px;top:269px;letter-spacing:-0.340px;">Monograph</span>
<svg style="left:295.0px;top:274.0px" width="5" height="3" viewBox="0 0 5 3"><path d="M0 0h5L2.5 3z" fill="#4d6ea8"/></svg>
<div class="in" style="left:135px;top:288px;width:170px;height:20px;"></div>
<div class="in" style="left:135px;top:311px;width:170px;height:20px;"></div>
<div class="in" style="left:135px;top:336px;width:170px;height:20px;"></div>
<div class="in" style="left:135px;top:359px;width:170px;height:20px;"></div>
<div class="in" style="left:135px;top:382px;width:170px;height:20px;"></div>
<div class="in" style="left:135px;top:405px;width:170px;height:20px;"></div>
<span class="x t" style="left:308.90px;top:223px;letter-spacing:-0.059px;">Current Status Date</span>
<div class="ind" style="left:426px;top:219px;width:170px;height:20px;"></div>
<span class="x t" style="left:429.00px;top:223px;">6/20/2014</span>
<span class="x t" style="left:308.90px;top:246px;letter-spacing:-0.187px;">Reason for Cancellation</span>
<div class="in" style="left:426px;top:242px;width:170px;height:20px;"></div>
<span class="x t" style="left:308.90px;top:269px;letter-spacing:-0.188px;">Document Type</span>
<div class="in" style="left:426px;top:265px;width:170px;height:20px;"></div>
<span class="x t" style="left:429.00px;top:269px;">Hard Copy</span>
<span class="x t" style="left:308.90px;top:293px;letter-spacing:-0.312px;">Location</span>
<div class="in" style="left:426px;top:290px;width:170px;height:20px;"></div>
<span class="x t" style="left:308.90px;top:317px;letter-spacing:-0.565px;">File Size</span>
<div class="ind" style="left:426px;top:313px;width:170px;height:20px;"></div>
<span class="x t" style="left:308.90px;top:340px;letter-spacing:-0.412px;">Barcode</span>
<div class="in" style="left:426px;top:336px;width:170px;height:20px;"></div>
<span class="x t" style="left:308.90px;top:363px;letter-spacing:-0.605px;">OCLC Number</span>
<div class="in" style="left:426px;top:359px;width:170px;height:20px;"></div>
<span class="x t" style="left:308.90px;top:386px;letter-spacing:-0.487px;">DOI</span>
<div class="in" style="left:426px;top:382px;width:170px;height:20px;"></div>
<span class="x t" style="left:309.60px;top:409px;letter-spacing:-0.018px;">Item Format</span>
<div class="in" style="left:426px;top:405px;width:170px;height:20px;"></div>
<span class="x t" style="left:429.00px;top:409px;">Book</span>
<div class="" style="left:267px;top:199px;width:12px;height:12px;border:1px solid #b3c3dc;background:linear-gradient(135deg,#cfd6e3,#f4f6fa);box-shadow:inset 0 0 0 1px #f3f6fb"></div>
<svg style="left:269px;top:201px" width="8" height="8" viewBox="0 0 8 8"><path d="M0.9 3.4L3.2 6.2L7.2 0.9" stroke="#425a8c" stroke-width="1.9" fill="none"/></svg>
<span class="x t" style="left:282.00px;top:198.7px;letter-spacing:-0.196px;">Visible to Students</span>
<div class="" style="left:383px;top:199px;width:12px;height:12px;border:1px solid #b3c3dc;background:linear-gradient(135deg,#cfd6e3,#f4f6fa);box-shadow:inset 0 0 0 1px #f3f6fb"></div>
<svg style="left:385px;top:201px" width="8" height="8" viewBox="0 0 8 8"><path d="M0.9 3.4L3.2 6.2L7.2 0.9" stroke="#425a8c" stroke-width="1.9" fill="none"/></svg>
<span class="x t" style="left:398.00px;top:198.7px;letter-spacing:-0.228px;">Instructor Provided</span>
<div class="in" style="left:600px;top:196px;width:360px;height:20px;"></div>
<div class="in" style="left:600px;top:219px;width:360px;height:20px;"></div>
<svg style="left:950.0px;top:228.0px" width="5" height="3" viewBox="0 0 5 3"><path d="M0 0h5L2.5 3z" fill="#4d6ea8"/></svg>
<span class="x t" style="left:712.50px;top:223px;letter-spacing:-0.768px;">24 Hours</span>
<div class="in" style="left:600px;top:242px;width:360px;height:20px;"></div>
<svg style="left:950.0px;top:251.0px" width="5" height="3" viewBox="0 0 5 3"><path d="M0 0h5L2.5 3z" fill="#4d6ea8"/></svg>
<span class="x t" style="left:713.00px;top:246px;letter-spacing:-0.382px;">6/20/2014</span>
<div class="in" style="left:600px;top:265px;width:360px;height:20px;"></div>
<svg style="left:950.0px;top:274.0px" width="5" height="3" viewBox="0 0 5 3"><path d="M0 0h5L2.5 3z" fill="#4d6ea8"/></svg>
<span class="x t" style="left:713.00px;top:269px;letter-spacing:-0.356px;">12/31/2014</span>
<div class="in" style="left:600px;top:317px;width:360px;height:20px;"></div>
<div class="in" style="left:600px;top:340px;width:360px;height:20px;"></div>
<div class="ind" style="left:600px;top:363px;width:360px;height:20px;"></div>
<div class="" style="left:601px;top:364px;width:358px;height:18px;background:#dde8f8"></div>
<div class="in" style="left:600px;top:386px;width:360px;height:20px;"></div>
<svg style="left:950.0px;top:395.0px" width="5" height="3" viewBox="0 0 5 3"><path d="M0 0h5L2.5 3z" fill="#4d6ea8"/></svg>
<span class="x t" style="left:735.40px;top:412px;letter-spacing:-0.088px;">Copyright Required</span>
<span class="x t" style="left:17.30px;top:463px;letter-spacing:-0.135px;">Title</span>
<span class="x t" style="left:17.30px;top:486px;letter-spacing:-0.004px;">Author</span>
<span class="x t" style="left:17.30px;top:509px;letter-spacing:-0.362px;">Publisher</span>
<span class="x t" style="left:17.30px;top:532px;letter-spacing:-0.292px;">Edition</span>
<span class="x t" style="left:17.30px;top:555px;letter-spacing:-0.212px;">Description</span>
<div class="in" style="left:135px;top:459px;width:825px;height:20px;"></div>
<span class="x t" style="left:138.00px;top:463px;letter-spacing:0.007px;">Harry Potter and the Goblet of Fire</span>
<div class="in" style="left:135px;top:482px;width:825px;height:20px;"></div>
<span class="x t" style="left:138.00px;top:486px;letter-spacing:-0.212px;">J.K. Rowling</span>
<div class="in" style="left:135px;top:505px;width:143px;height:20px;"></div>
<span class="x t" style="left:281.50px;top:509px;letter-spacing:-0.347px;">Publication Place</span>
<div class="in" style="left:399px;top:505px;width:143px;height:20px;"></div>
<div class="in" style="left:135px;top:528px;width:143px;height:20px;"></div>
<span class="x t" style="left:281.50px;top:532px;letter-spacing:-0.534px;">Volume</span>
<div class="in" style="left:399px;top:528px;width:143px;height:20px;"></div>
<div class="in" style="left:135px;top:551px;width:825px;height:20px;"></div>
<span class="x t" style="left:712.00px;top:509px;letter-spacing:-0.286px;">Month/Year</span>
<div class="in" style="left:827px;top:505px;width:79px;height:20px;"></div>
<div class="in" style="left:910px;top:505px;width:50px;height:20px;"></div>
<span class="x t" style="left:711.00px;top:532px;letter-spacing:-0.841px;">Pages</span>
<div class="in" style="left:827px;top:528px;width:133px;height:20px;"></div>
<div class="" style="left:15px;top:601px;width:947px;height:71px;border:1px solid #c6d7ee;background:#fff"></div>
<div class="" style="left:15px;top:601px;width:947px;height:23px;background:linear-gradient(#f2f7fe 0%,#dde9fa 50%,#c9dcf8 100%);border:1px solid #7da2d8"></div>
<span class="x t" style="left:20.90px;top:607px;letter-spacing:-0.363px;">Added By</span>
<div class="" style="left:251px;top:602px;width:1px;height:21px;background:#86a8dc"></div>
<span class="x t" style="left:256.90px;top:607px;letter-spacing:0.005px;">Note Type</span>
<div class="" style="left:487px;top:602px;width:1px;height:21px;background:#86a8dc"></div>
<span class="x t" style="left:492.90px;top:607px;letter-spacing:0.052px;">Note Date</span>
<div class="" style="left:723px;top:602px;width:1px;height:21px;background:#86a8dc"></div>
<span class="x t" style="left:728.90px;top:607px;letter-spacing:-0.062px;">Note</span>
<svg style="left:708px;top:608px" width="10" height="9" viewBox="0 0 10 9"><path d="M0.5 1H9.5L5 8z" fill="#a6c8f6"/></svg>
<div class="" style="left:8px;top:682px;width:965px;height:23px;border-top:1px solid #5478b4;background:linear-gradient(#e2ecfb 0px,#d6e4f8 6px,#b2cef5 7px,#c4daf7 14px,#dbe8f9 100%)"></div>
<span class="x tb" style="left:16.30px;top:688px;letter-spacing:0.276px;">Awaiting Reserves Processing</span>
<div class="" style="left:967px;top:691px;width:2px;height:2px;background:#fff"></div>
<div class="" style="left:966px;top:690px;width:2px;height:2px;background:#4f80cc"></div>
<div class="" style="left:963px;top:695px;width:2px;height:2px;background:#fff"></div>
<div class="" style="left:962px;top:694px;width:2px;height:2px;background:#4f80cc"></div>
<div class="" style="left:967px;top:695px;width:2px;height:2px;background:#fff"></div>
<div class="" style="left:966px;top:694px;width:2px;height:2px;background:#4f80cc"></div>
<div class="" style="left:959px;top:699px;width:2px;height:2px;background:#fff"></div>
<div class="" style="left:958px;top:698px;width:2px;height:2px;background:#4f80cc"></div>
<div class="" style="left:963px;top:699px;width:2px;height:2px;background:#fff"></div>
<div class="" style="left:962px;top:698px;width:2px;height:2px;background:#4f80cc"></div>
<div class="" style="left:967px;top:699px;width:2px;height:2px;background:#fff"></div>
<div class="" style="left:966px;top:698px;width:2px;height:2px;background:#4f80cc"></div>
<div class="" style="left:476px;top:125px;width:257px;height:487px;border:1px solid #7c7c7c;background:#fafafa"></div>
<div class="" style="left:477px;top:126px;width:29px;height:485px;background:#e9eeee;border-right:1px solid #c9cccc"></div>
<span class="x s" style="left:512.20px;top:131.5px;letter-spacing:0.044px;color:#121f7c;">Route to Acquisitions</span>
<span class="x s" style="left:512.20px;top:155.5px;letter-spacing:-0.248px;color:#121f7c;">Recall Item</span>
<span class="x s" style="left:512.20px;top:182.5px;letter-spacing:0.156px;color:#121f7c;">Awaiting Acquisitions Fulfillment</span>
<span class="x s" style="left:512.20px;top:206.5px;letter-spacing:0.181px;color:#121f7c;">Awaiting Acquisitions Notification</span>
<span class="x s" style="left:512.20px;top:230.5px;letter-spacing:-0.044px;color:#121f7c;">Awaiting File Type Resolution</span>
<span class="x s" style="left:512.20px;top:254.5px;letter-spacing:-0.126px;color:#121f7c;">Awaiting ILL Processing</span>
<span class="x s" style="left:512.20px;top:278.5px;letter-spacing:-0.069px;color:#121f7c;">Awaiting Purchase</span>
<span class="x s" style="left:512.20px;top:302.5px;letter-spacing:-0.151px;color:#121f7c;">Awaiting Recall Processing</span>
<span class="x s" style="left:512.20px;top:326.5px;letter-spacing:-0.256px;color:#121f7c;">Awaiting Reserves Processing</span>
<span class="x s" style="left:512.20px;top:350.5px;letter-spacing:-0.080px;color:#121f7c;">Awaiting Review by Staff</span>
<span class="x s" style="left:512.20px;top:374.5px;letter-spacing:-0.007px;color:#121f7c;">Awaiting Scanning</span>
<span class="x s" style="left:512.20px;top:398.5px;letter-spacing:-0.154px;color:#121f7c;">Awaiting Stacks Searching</span>
<span class="x s" style="left:512.20px;top:422.5px;letter-spacing:0.061px;color:#121f7c;">Awaiting Supply by Instructor</span>
<span class="x s" style="left:512.20px;top:446.5px;letter-spacing:-0.290px;color:#121f7c;">In Recall Processing</span>
<span class="x s" style="left:512.20px;top:470.5px;letter-spacing:-0.328px;color:#121f7c;">In Stacks Searching</span>
<span class="x s" style="left:512.20px;top:494.5px;letter-spacing:0.095px;color:#121f7c;">Item Activation Pending</span>
<span class="x s" style="left:512.20px;top:518.5px;letter-spacing:-0.238px;color:#121f7c;">Item Available at Reserve Desk</span>
<span class="x s" style="left:512.20px;top:542.5px;letter-spacing:-0.173px;color:#121f7c;">Item Available on Electronic Reserves</span>
<span class="x s" style="left:512.20px;top:566.5px;letter-spacing:-0.015px;color:#121f7c;">Item Cancelled by Instructor</span>
<span class="x s" style="left:512.20px;top:590.5px;letter-spacing:-0.085px;color:#121f7c;">Item Cancelled by Staff</span>
<svg style="left:482px;top:130px" width="18" height="18" viewBox="482 130 18 18">
<defs><linearGradient id="mo1" x1="0" y1="0" x2="0" y2="1"><stop offset="0" stop-color="#5fc84a"/><stop offset="1" stop-color="#2f9a28"/></linearGradient>
<radialGradient id="mo2" cx="40%" cy="35%" r="65%"><stop offset="0" stop-color="#f2f2f2"/><stop offset="1" stop-color="#9a9a9a"/></radialGradient>
<radialGradient id="mo3" cx="40%" cy="35%" r="65%"><stop offset="0" stop-color="#f6d4bc"/><stop offset="1" stop-color="#c08a6c"/></radialGradient></defs>
<rect x="483" y="131" width="13" height="8" fill="url(#mo1)" stroke="#2c9a26" stroke-width="0.8"/>
<rect x="486.2" y="134.2" width="13" height="7.6" fill="url(#mo1)" stroke="#2c9a26" stroke-width="0.8"/>
<path d="M487.5 135.6H498" stroke="#8be07a" stroke-width="1"/>
<circle cx="491.4" cy="141.2" r="2.9" fill="url(#mo2)" stroke="#7c7c7c" stroke-width="0.7"/>
<circle cx="494.9" cy="143.6" r="3.1" fill="url(#mo2)" stroke="#7c7c7c" stroke-width="0.7"/>
<circle cx="485.4" cy="144.3" r="2.4" fill="url(#mo3)" stroke="#a87a5c" stroke-width="0.7"/>
</svg>
<svg style="left:482px;top:154px" width="18" height="18" viewBox="482 154 18 18">
<path d="M490.6 155L483.1 162.8L490 170.8L499 162z" fill="#b87300" stroke="#8a5200" stroke-width="0.6"/>
<path d="M491.6 155.6L484.6 162.8L490.8 169.4L498.4 162z" fill="#ffd21a"/>
<path d="M490.6 155L483.1 162.8L484.4 163.4L491.8 155.8z" fill="#f4ecd0"/>
<path d="M491.2 158.4L487.6 162.2L491 166L494.8 162.2z" fill="#e6f0fc"/>
<path d="M491 158.6L494.6 162" stroke="#4a8ae0" stroke-width="1.2"/>
<path d="M490.2 164.6L494.6 161.4L495.2 163.2C497.8 163.6 499.2 166.2 498.8 170C497.8 167.6 496.6 166.6 495 166.8L495.4 168.6z" fill="#8d8de6" stroke="#7a7ad8" stroke-width="0.5"/>
</svg>
<div class="" style="left:477px;top:150px;width:255px;height:27px;border:3px solid #a90b12"></div>
</body></html>
